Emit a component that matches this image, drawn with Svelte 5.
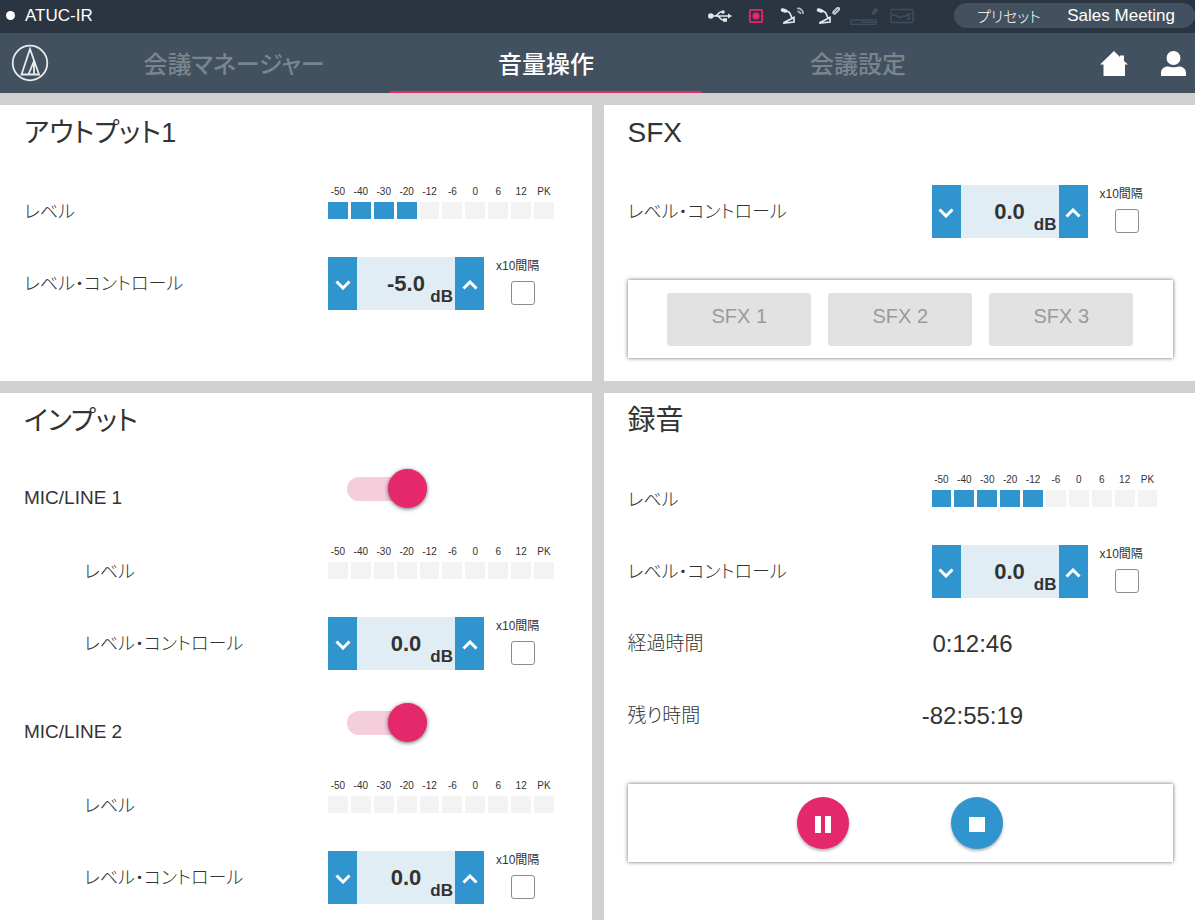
<script lang="ts">
    const scale = ["-50", "-40", "-30", "-20", "-12", "-6", "0", "6", "12", "PK"];
    const tabs = ["会議マネージャー", "音量操作", "会議設定"];
    let activeTab = $state(1);

    let output = $state({ id: "output", level: 4, gain: -5, coarse: false });
    let sfx = $state({ id: "sfx", gain: 0, coarse: false });
    let recording = $state({ id: "rec", level: 5, gain: 0, coarse: false });
    let inputs = $state([
        { id: "mic1", name: "MIC/LINE 1", on: true, level: 0, gain: 0, coarse: false },
        { id: "mic2", name: "MIC/LINE 2", on: true, level: 0, gain: 0, coarse: false },
    ]);

    type Channel = { id: string; gain: number; coarse: boolean };

    // 0.5 dB per press, ten times that when the box is ticked
    function step(ch: Channel, dir: number) {
        ch.gain += dir * (ch.coarse ? 5 : 0.5);
    }
</script>

{#snippet meter(level: number)}
    <div class="meter" role="img" aria-label="レベル">
        {#each scale as mark, i}
            <div class="meter-step">
                <span class="mark">{mark}</span>
                <span class="cell" class:lit={i < level}></span>
            </div>
        {/each}
    </div>
{/snippet}

{#snippet stepper(ch: Channel)}
    <div class="stepper">
        <button class="step" aria-label="下げる" onclick={() => step(ch, -1)}>
            <svg width="16" height="10" viewBox="0 0 16 10"><path d="M1.5 1.5 8 8 14.5 1.5" /></svg>
        </button>
        <output class="gain">
            <span class="number">{ch.gain.toFixed(1)}</span>
            <span class="unit">dB</span>
        </output>
        <button class="step" aria-label="上げる" onclick={() => step(ch, 1)}>
            <svg width="16" height="10" viewBox="0 0 16 10"><path d="M1.5 8.5 8 2 14.5 8.5" /></svg>
        </button>
    </div>
    <div class="coarse">
        <label for="{ch.id}-coarse">x10間隔</label>
        <input id="{ch.id}-coarse" type="checkbox" bind:checked={ch.coarse} />
    </div>
{/snippet}

<div class="page">
    <header class="status">
        <span class="dot"></span>
        <span class="device">ATUC-IR</span>
        <div class="status-icons">
            <!-- usb -->
            <svg width="28" height="16" viewBox="0 0 28 16" fill="none" stroke="#e4e6e8" stroke-width="1.5">
                <path d="M3 8h18M7 8c3 0 3-4 6-4h2M9 8c3 0 3 4 6 4h2" />
                <circle cx="2.8" cy="8" r="2.8" fill="#e4e6e8" stroke="none" />
                <circle cx="15" cy="4" r="1.8" fill="#e4e6e8" stroke="none" />
                <path d="M15 10.2h4v3.600h-4zM20 5.500l4 2.500-4 2.500z" fill="#e4e6e8" stroke="none" />
            </svg>
            <!-- recording -->
            <svg width="20" height="16" viewBox="-2 0 20 16" fill="none" stroke="#e4286b" stroke-width="1.800">
                <rect x="1.800" y="1.800" width="12.400" height="12.400" rx="1" />
                <circle cx="8" cy="8" r="3.600" fill="#e4286b" stroke="none" />
            </svg>
            <!-- wireless mic -->
            <svg width="28" height="18" viewBox="-4 0 28 18" fill="none" stroke="#e4e6e8" stroke-width="1.700">
                <path d="M6 3.500 9.500 5.500 12 11M4 15.500 14 10.500V15L4 16z" />
                <path d="M2.500 3 5.500 4" stroke-width="3.600" stroke-linecap="round" />
                <path d="M17 1.500c3-.5 6.500 1.500 6 5.500M17.500 4.500c2 0 3 1 3 2.500" stroke="#b3b9be" />
            </svg>
            <!-- wired mic -->
            <svg width="26" height="18" viewBox="-2 0 26 18" fill="none" stroke="#e4e6e8" stroke-width="1.700">
                <path d="M6 3.500 9.500 5.500 12 11M4 15.500 14 10.500V15L4 16z" />
                <path d="M2.500 3 5.500 4" stroke-width="3.600" stroke-linecap="round" />
                <path d="M18.500 5.500 22 2" stroke="#c3c8cc" stroke-width="4.500" stroke-linecap="round" />
                <path d="M18.500 5.500 22 2" stroke="#5a6570" stroke-width="1" />
            </svg>
            <!-- link unit, off -->
            <svg width="28" height="18" viewBox="0 0 28 18" fill="none" stroke="#3c4d5c" stroke-width="1.400">
                <path d="M1 13h25v4.500H1zM11 15.300h15" />
                <path d="M23.500 6 26 3" stroke-width="4" stroke-linecap="round" />
            </svg>
            <!-- monitor, off -->
            <svg width="26" height="16" viewBox="-2 0 26 16" fill="none" stroke="#3c4d5c" stroke-width="1.600">
                <rect x="1" y="1.500" width="22" height="13" rx="1" />
                <path d="M2 7h4l4 3 3-2h3l5-3M17 6l3 4-3 2" />
            </svg>
        </div>
        <div class="preset">
            <span class="preset-label">プリセット</span>
            <span>Sales Meeting</span>
        </div>
    </header>

    <nav>
        <div class="logo">
            <svg width="38" height="38" viewBox="0 0 38 38" fill="none" stroke="#e9ebec" stroke-width="1.800">
                <circle cx="19" cy="19" r="17.300" />
                <path d="M19 5 10.500 30.500h17.500zM17.500 30.500l5.500-13.500M23 17v13.500" />
            </svg>
        </div>
        {#each tabs as tab, i}
            <button class="tab" class:active={i === activeTab} onclick={() => (activeTab = i)}>{tab}</button>
        {/each}
        <div class="nav-icons">
            <a href="#home" aria-label="ホーム">
                <svg width="28" height="25" viewBox="0 0 28 25" fill="#fff">
                    <path d="M14 0 20 6V4.500h4V10l4 3.500h-3V25H3.500V13.500H0z" />
                </svg>
            </a>
            <a href="#user" aria-label="ユーザー">
                <svg width="25" height="25" viewBox="0 0 25 25" fill="#fff">
                    <circle cx="12.500" cy="7" r="7" />
                    <path d="M0 25v-3c0-4 3-6.500 7-6.500 3 1 8 1 11 0 4 0 7 2.500 7 6.500v3z" />
                </svg>
            </a>
        </div>
    </nav>

    <main>
        <section>
            <h2 class="kana">アウトプット1</h2>
            <div class="row">
                <span class="name">レベル</span>
                {@render meter(output.level)}
            </div>
            <div class="row">
                <span class="name">レベル・コントロール</span>
                {@render stepper(output)}
            </div>
        </section>

        <section>
            <h2>SFX</h2>
            <div class="row">
                <span class="name">レベル・コントロール</span>
                {@render stepper(sfx)}
            </div>
            <div class="box sfx-box">
                {#each [1, 2, 3] as n}
                    <button class="sfx" disabled>SFX {n}</button>
                {/each}
            </div>
        </section>

        <section>
            <h2 class="kana">インプット</h2>
            {#each inputs as input}
                <div class="input">
                    <div class="row">
                        <label class="name mic" for={input.id}>{input.name}</label>
                        <input class="toggle" id={input.id} type="checkbox" role="switch" bind:checked={input.on} />
                    </div>
                    <div class="row">
                        <span class="name indent">レベル</span>
                        {@render meter(input.level)}
                    </div>
                    <div class="row">
                        <span class="name indent">レベル・コントロール</span>
                        {@render stepper(input)}
                    </div>
                </div>
            {/each}
        </section>

        <section>
            <h2>録音</h2>
            <div class="row">
                <span class="name">レベル</span>
                {@render meter(recording.level)}
            </div>
            <div class="row">
                <span class="name">レベル・コントロール</span>
                {@render stepper(recording)}
            </div>
            <div class="row">
                <span class="name time-name">経過時間</span>
                <span class="time">0:12:46</span>
            </div>
            <div class="row">
                <span class="name time-name">残り時間</span>
                <span class="time">-82:55:19</span>
            </div>
            <div class="box rec-box">
                <button class="round pause" aria-label="一時停止">
                    <svg width="16" height="17" viewBox="0 0 16 17"><path d="M0 0h6v17H0zM10 0h6v17h-6z" /></svg>
                </button>
                <button class="round stop" aria-label="停止">
                    <svg width="16" height="15" viewBox="0 0 16 15"><path d="M0 0h16v15H0z" /></svg>
                </button>
            </div>
        </section>
    </main>
</div>

<style>
    :global(body) {
        margin: 0;
        background-color: #d0d0ce;
    }

    .page {
        min-height: 100vh;
        display: flex;
        flex-direction: column;
        font-family: "Liberation Sans", "Noto Sans CJK JP", sans-serif;
        font-feature-settings: "palt";
        font-size: 18px;
        color: #333;
    }

    button {
        border: none;
        padding: 0;
        font-family: inherit;
        font-feature-settings: inherit;
        cursor: pointer;
    }
    svg {
        display: block;
    }

    .status {
        display: flex;
        align-items: center;
        height: 33px;
        padding-bottom: 2px;
        box-sizing: border-box;
        background-color: #2b3441;
        color: #fff;
        font-size: 17px;
    }
    .dot {
        width: 9px;
        height: 9px;
        margin-left: 6px;
        border-radius: 50%;
        background-color: #fff;
    }
    .device {
        margin-left: 10px;
    }
    .status-icons {
        display: flex;
        align-items: center;
        gap: 10px;
        margin-left: auto;
        margin-right: 40px;
    }
    .preset {
        display: flex;
        align-items: center;
        justify-content: space-between;
        width: 241px;
        height: 25px;
        padding: 0 20px 0 23px;
        box-sizing: border-box;
        border-radius: 13px;
        background-color: #42515f;
    }
    .preset-label {
        font-size: 15px;
        font-weight: 300;
    }

    nav {
        display: flex;
        height: 60px;
        background-color: #42515f;
    }
    .logo {
        display: flex;
        align-items: center;
        width: 67px;
        padding-left: 11px;
    }
    .tab {
        flex: 1;
        border-bottom: 2px solid transparent;
        background: none;
        color: #7b858d;
        font-size: 24px;
        font-weight: 500;
    }
    .tab.active {
        color: #fff;
        border-bottom-color: #e4286b;
    }
    .nav-icons {
        display: flex;
        align-items: center;
        justify-content: flex-end;
        gap: 33px;
        width: 172px;
        padding-right: 9px;
    }

    main {
        flex: 1;
        display: grid;
        grid-template-columns: 1fr 1fr;
        grid-template-rows: auto 1fr;
        gap: 12px;
        padding-top: 12px;
    }
    section {
        padding: 0 22px 23px 24px;
        background-color: #fff;
    }
    h2 {
        margin: 0 0 15px;
        font-size: 28px;
        line-height: 56px;
        font-weight: 400;
    }
    .kana {
        font-size: 27px;
    }

    .row {
        display: flex;
        align-items: flex-start;
        height: 72px;
        padding-top: 9px;
        box-sizing: border-box;
    }
    .name {
        width: 304px;
        box-sizing: border-box;
        line-height: 54px;
        font-weight: 300;
    }
    .indent {
        padding-left: 60px;
    }
    .mic {
        font-size: 19px;
        line-height: 50px;
    }
    .input + .input {
        margin-top: 18px;
    }

    .meter {
        display: grid;
        grid-template-columns: repeat(10, 1fr);
        gap: 3px;
        width: 226px;
    }
    .meter-step {
        display: flex;
        flex-direction: column;
        align-items: center;
        gap: 4px;
    }
    .mark {
        font-size: 10px;
        line-height: 13px;
    }
    .cell {
        width: 100%;
        height: 17px;
        background-color: #f3f3f3;
    }
    .lit {
        background-color: #3095ce;
    }

    .stepper {
        display: flex;
        height: 53px;
    }
    .step {
        display: flex;
        align-items: center;
        justify-content: center;
        width: 29px;
        padding-top: 2px;
        background-color: #3095ce;
    }
    .step path {
        fill: none;
        stroke: #fff;
        stroke-width: 3;
    }
    .gain {
        display: grid;
        width: 98px;
        background-color: #e0edf5;
        font-weight: 700;
    }
    .number,
    .unit {
        grid-area: 1 / 1;
    }
    .number {
        justify-self: center;
        font-size: 22px;
        line-height: 53px;
    }
    .unit {
        align-self: end;
        justify-self: end;
        padding: 0 2px 3px 0;
        font-size: 17px;
        line-height: 20px;
    }

    .coarse {
        display: flex;
        flex-direction: column;
        gap: 6px;
        margin-left: 12px;
    }
    .coarse label {
        font-size: 12px;
        line-height: 18px;
    }
    .coarse input {
        appearance: none;
        width: 24px;
        height: 24px;
        margin: 0 0 0 15px;
        border: 1px solid #8c8c8c;
        border-radius: 3px;
        background-color: #fff;
    }
    .coarse input:checked {
        background-color: #3095ce;
    }

    .toggle {
        appearance: none;
        position: relative;
        width: 80px;
        height: 24px;
        margin: 4px 0 0 19px;
        border-radius: 12px;
        background-color: #f5cedc;
        cursor: pointer;
    }
    .toggle::before {
        content: "";
        position: absolute;
        top: -8px;
        left: 0;
        width: 39px;
        height: 39px;
        border-radius: 50%;
        background-color: #aaa;
        box-shadow: 0 1px 4px rgba(0, 0, 0, 0.6);
    }
    .toggle:checked::before {
        left: 41px;
        background-color: #e4286b;
    }

    .time-name {
        width: 294px;
        font-size: 19px;
    }
    .time {
        width: 102px;
        text-align: center;
        font-size: 24px;
        line-height: 54px;
    }

    .box {
        display: flex;
        align-items: center;
        justify-content: center;
        height: 78px;
        margin-top: 32px;
        box-shadow: 0 0 4px rgba(0, 0, 0, 0.6);
    }
    .sfx-box {
        gap: 17px;
    }
    .sfx {
        width: 144px;
        height: 53px;
        padding-bottom: 6px;
        border-radius: 3px;
        background-color: #e2e2e2;
        color: #9c9a98;
        font-size: 20px;
    }
    .rec-box {
        gap: 102px;
    }
    .round {
        display: flex;
        align-items: center;
        justify-content: center;
        width: 52px;
        height: 52px;
        padding-top: 2px;
        border-radius: 50%;
        box-shadow: 0 2px 3px rgba(0, 0, 0, 0.3);
    }
    .round path {
        fill: #fff;
    }
    .pause {
        background-color: #e4286b;
    }
    .stop {
        background-color: #3095ce;
    }
</style>
